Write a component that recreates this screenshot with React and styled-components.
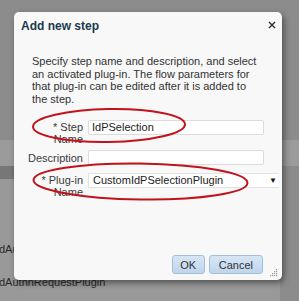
import React from 'react';
import styled, { createGlobalStyle } from 'styled-components';

const GlobalStyle = createGlobalStyle`
    html, body {
        margin: 0;
        padding: 0;
    }
    body {
        width: 299px;
        height: 301px;
        overflow: hidden;
        background: #8c8c8c;
        font-family: "Liberation Sans", Arial, sans-serif;
    }
`

export default function App() {
    return (
        <Page>
            <GlobalStyle />
            <Backdrop>
                <TopArea />
                <LightStrip />
                <Table>
                    <HeaderBand />
                    <TableRow top={64}>dAuthnResponsePlugin</TableRow>
                    <TableRow top={20}>dAuthnRequestPlugin</TableRow>
                </Table>
            </Backdrop>

            <Dialog>
                <Header>
                    <Title>Add new step</Title>
                    <Close aria-label="close">
                        <svg width="8" height="8" viewBox="0 0 8 8">
                            <path d="M1 1 L7 7 M7 1 L1 7" stroke="#2a2a2a" strokeWidth="1.4" />
                        </svg>
                    </Close>
                </Header>
                <Intro>
                    Specify step name and description, and select<br />
                    an activated plug-in. The flow parameters for<br />
                    that plug-in can be edited after it is added to<br />
                    the step.
                </Intro>
                <Form>
                    <FieldRow top={14}>
                        <Label>* Step<br />Name</Label>
                        <Input width={176} defaultValue="IdPSelection" />
                    </FieldRow>
                    <FieldRow top={5} center>
                        <Label>Description</Label>
                        <Input width={176} defaultValue="" />
                    </FieldRow>
                    <FieldRow top={8}>
                        <Label>* Plug-in<br />Name</Label>
                        <Select>
                            <span>CustomIdPSelectionPlugin</span>
                            <Arrow>▼</Arrow>
                        </Select>
                    </FieldRow>
                </Form>
                <Footer>
                    <Button>OK</Button>
                    <Button wide>Cancel</Button>
                    <Grip width="8" height="9" viewBox="0 0 8 9">
                        {[[6, 1], [4, 3], [6, 3], [2, 5], [4, 5], [6, 5], [0, 7], [2, 7], [4, 7], [6, 7]].map(([x, y], i) => (
                            <rect key={i} x={x} y={y} width="1.2" height="1.2" fill="#9a9a9a" />
                        ))}
                    </Grip>
                </Footer>
                <Marks width="268" height="268" viewBox="0 0 268 268">
                    <ellipse cx="95" cy="113.5" rx="76" ry="16.5" fill="none" stroke="#c1131c" strokeWidth="2" transform="rotate(-1 95 113.5)" />
                    <ellipse cx="126.5" cy="169.5" rx="107" ry="18" fill="none" stroke="#c1131c" strokeWidth="2" transform="rotate(0.8 126 169.5)" />
                </Marks>
            </Dialog>
        </Page>
    )
}

const Page = styled.div`
    position: relative;
    width: 299px;
    height: 301px;
    overflow: hidden;
`

const Backdrop = styled.div`
    display: flex;
    flex-direction: column;
    height: 100%;
`

const TopArea = styled.div`
    height: 140px;
    background: #8c8c8c;
`

const LightStrip = styled.div`
    height: 26px;
    background: #9b9b9b;
`

const Table = styled.div`
    display: flex;
    flex-direction: column;
    flex: 1;
    width: 280px;
    background: #999;
`

const HeaderBand = styled.div`
    height: 13px;
    background: #777;
`

const TableRow = styled.div`
    margin-top: ${props => props.top}px;
    font-size: 11px;
    color: #2a2a2a;
    line-height: 13px;
    margin-left: -1px;
`

const Dialog = styled.div`
    position: absolute;
    left: 14px;
    top: 12px;
    width: 268px;
    height: 268px;
    box-sizing: border-box;
    background: #f8f8f9;
    border-radius: 5px;
    box-shadow: 2px 3px 6px rgba(0, 0, 0, 0.45);
    display: flex;
    flex-direction: column;
`

const Header = styled.div`
    display: flex;
    align-items: flex-start;
    justify-content: space-between;
    padding: 6px 6px 0 7px;
`

const Title = styled.div`
    font-size: 12px;
    font-weight: bold;
    line-height: 16px;
    color: #1c3a4e;
`

const Close = styled.div`
    width: 8px;
    height: 8px;
    margin-top: 3px;
    display: flex;
`

const Intro = styled.div`
    margin-top: 21px;
    padding-left: 18px;
    font-size: 11px;
    line-height: 12.7px;
    color: #333;
`

const Form = styled.div`
    display: flex;
    flex-direction: column;
`

const FieldRow = styled.div`
    display: flex;
    align-items: ${props => props.center ? 'center' : 'flex-start'};
    gap: 5px;
    margin-top: ${props => props.top}px;
`

const Label = styled.div`
    width: 69px;
    flex: none;
    text-align: right;
    font-size: 11px;
    line-height: 12px;
    color: #3a3a3a;
    padding-top: 1px;
`

const Input = styled.input`
    width: ${props => props.width}px;
    height: 15px;
    box-sizing: border-box;
    border: 1px solid #dcdcdc;
    border-radius: 2px;
    background: #fff;
    padding: 0 3px;
    font-family: "Liberation Sans", Arial, sans-serif;
    font-size: 11px;
    color: #222;
    outline: none;
`

const Select = styled.div`
    width: 191px;
    height: 15px;
    box-sizing: border-box;
    border: 1px solid #e2e2e2;
    border-right: none;
    background: #fff;
    padding: 0 2px 0 4px;
    display: flex;
    align-items: center;
    justify-content: space-between;
    font-size: 11px;
    color: #222;
`

const Arrow = styled.span`
    font-size: 8px;
    color: #111;
`

const Footer = styled.div`
    margin-top: auto;
    display: flex;
    justify-content: flex-end;
    align-items: flex-end;
    gap: 4px;
    padding: 0 4px 3px 0;
`

const Button = styled.button`
    height: 19px;
    margin-bottom: 3px;
    padding: 0 ${props => props.wide ? 9 : 7}px;
    min-width: 33px;
    border: 1px solid #a4bfdb;
    border-radius: 3px;
    background: linear-gradient(#d7e6f5, #bfd5ec);
    font-family: "Liberation Sans", Arial, sans-serif;
    font-size: 11px;
    color: #333;

    &:last-of-type {
        margin-right: 3px;
    }
`

const Grip = styled.svg`
    flex: none;
`

const Marks = styled.svg`
    position: absolute;
    left: 0;
    top: 0;
    pointer-events: none;
`
